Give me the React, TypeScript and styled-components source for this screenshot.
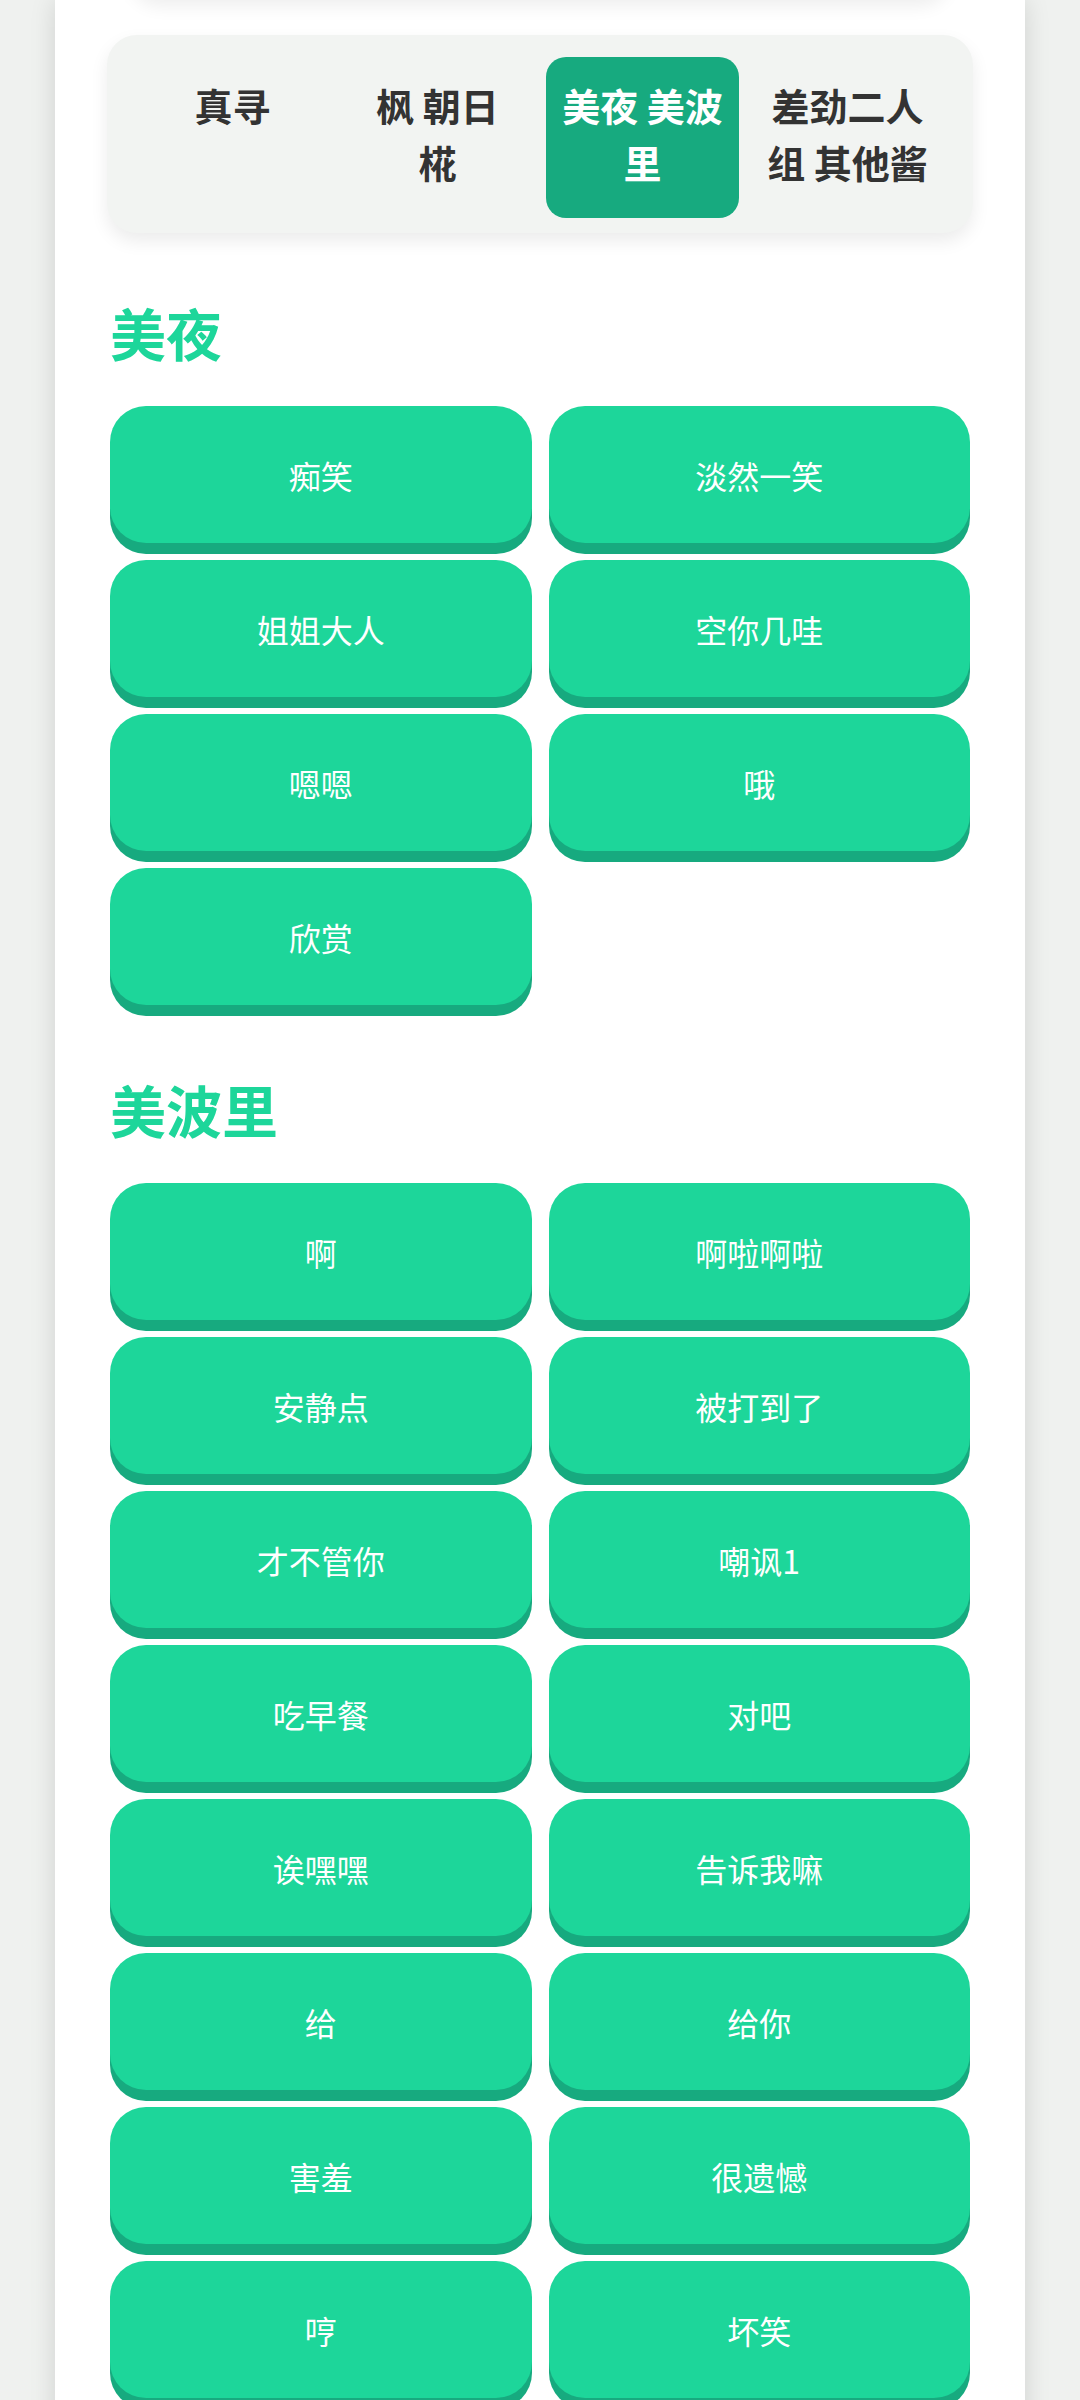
import React, { useState } from 'react';
import styled, { createGlobalStyle } from 'styled-components';

const GlobalStyle = createGlobalStyle`
  html, body {
    margin: 0;
    padding: 0;
    background: #eff1ef;
  }
  body {
    font-family: "Noto Sans CJK SC", "Noto Sans", "Liberation Sans", sans-serif;
  }
`;

const GREEN = '#1dd69a';
const GREEN_DARK = '#17aa7f';

type Tab = { id: string; lines: string[] };

const TABS: Tab[] = [
  { id: 'zhenxun', lines: ['真寻'] },
  { id: 'kaede', lines: ['枫 朝日', '椛'] },
  { id: 'miyo', lines: ['美夜 美波', '里'] },
  { id: 'others', lines: ['差劲二人', '组 其他酱'] },
];

const SECTIONS = [
  {
    title: '美夜',
    sounds: ['痴笑', '淡然一笑', '姐姐大人', '空你几哇', '嗯嗯', '哦', '欣赏'],
  },
  {
    title: '美波里',
    sounds: [
      '啊',
      '啊啦啊啦',
      '安静点',
      '被打到了',
      '才不管你',
      '嘲讽1',
      '吃早餐',
      '对吧',
      '诶嘿嘿',
      '告诉我嘛',
      '给',
      '给你',
      '害羞',
      '很遗憾',
      '哼',
      '坏笑',
    ],
  },
];

const Page = styled.div`
  padding: 0 55px;
  min-height: 2400px;
  overflow: hidden;
`;

const Card = styled.main`
  background: #ffffff;
  min-height: 2400px;
  padding: 35px 55px 60px 55px;
  box-sizing: border-box;
  box-shadow: 0 0 24px rgba(0, 0, 0, 0.13);
`;

// the panel above is scrolled out of view, only its shadow shows
const PanelAbove = styled.div`
  height: 60px;
  margin: -95px 20px 35px;
  border-radius: 30px;
  background: #ffffff;
  box-shadow: 0 6px 18px rgba(0, 0, 0, 0.07);
`;

const TabBar = styled.nav`
  display: grid;
  grid-template-columns: repeat(4, 1fr);
  gap: 12px;
  margin: 0 -3px;
  padding: 22px 29px 15px;
  background: #f2f4f2;
  border-radius: 30px;
  box-shadow: 0 8px 18px rgba(0, 0, 0, 0.08);
`;

const TabButton = styled.button<{ $active?: boolean }>`
  display: flex;
  flex-direction: column;
  justify-content: flex-start;
  align-items: center;
  border: none;
  margin: 0;
  padding: 19px 8px 25px;
  min-height: 161px;
  border-radius: 20px;
  background: ${(p) => (p.$active ? GREEN_DARK : 'transparent')};
  color: ${(p) => (p.$active ? '#ffffff' : '#333333')};
  font-family: inherit;
  font-size: 38px;
  font-weight: 700;
  line-height: 57px;
  text-align: center;
  cursor: pointer;
`;

const TabLine = styled.span`
  display: block;
  white-space: nowrap;
`;

const Section = styled.section`
  margin-top: 66px;

  & + & {
    margin-top: 71px;
  }
`;

const Heading = styled.h2`
  margin: 0 0 42px;
  color: ${GREEN};
  font-size: 56px;
  font-weight: 700;
  line-height: 65px;
`;

const SoundGrid = styled.div`
  display: grid;
  grid-template-columns: 1fr 1fr;
  gap: 17px;
`;

const SoundButton = styled.button`
  height: 137px;
  border: none;
  border-radius: 36px;
  background: ${GREEN};
  box-shadow: 0 11px 0 ${GREEN_DARK};
  color: #ffffff;
  font-family: inherit;
  font-size: 32px;
  font-weight: 400;
  cursor: pointer;
`;

export default function App() {
  const [active, setActive] = useState('miyo');

  return (
    <>
      <GlobalStyle />
      <Page>
        <Card>
          <PanelAbove />
          <TabBar>
            {TABS.map((tab) => (
              <TabButton key={tab.id} $active={tab.id === active} onClick={() => setActive(tab.id)}>
                {tab.lines.map((line) => (
                  <TabLine key={line}>{line}</TabLine>
                ))}
              </TabButton>
            ))}
          </TabBar>

          {SECTIONS.map((section) => (
            <Section key={section.title}>
              <Heading>{section.title}</Heading>
              <SoundGrid>
                {section.sounds.map((name) => (
                  <SoundButton key={name}>{name}</SoundButton>
                ))}
              </SoundGrid>
            </Section>
          ))}
        </Card>
      </Page>
    </>
  );
}
